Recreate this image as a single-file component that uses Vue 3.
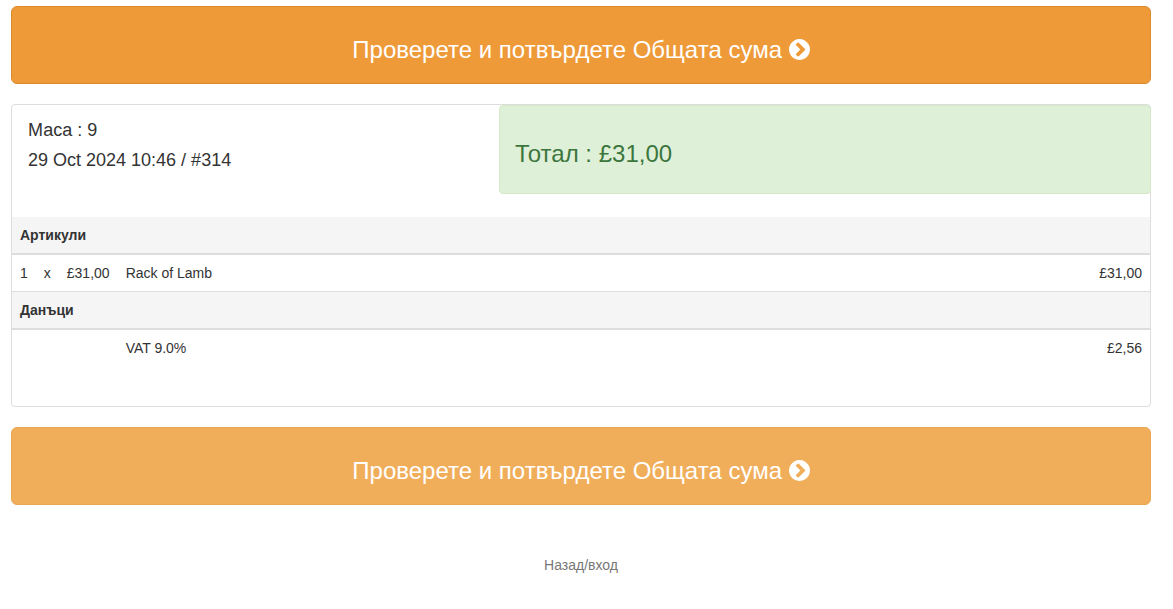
<script setup>
const items = [{ qty: '1', x: 'x', price: '£31,00', name: 'Rack of Lamb', amount: '£31,00' }]
const taxes = [{ name: 'VAT 9.0%', amount: '£2,56' }]
const label = 'Проверете и потвърдете Общата сума'
</script>

<template>
  <div class="page">
    <button class="pay-btn pay-btn--active">
      {{ label }}
      <svg class="chevron" viewBox="128 128 1536 1536"><path d="M845 1395l454-454q19-19 19-45t-19-45l-454-454q-19-19-45-19t-45 19l-102 102q-19 19-19 45t19 45l307 307-307 307q-19 19-19 45t19 45l102 102q19 19 45 19t45-19zm819-499q0 209-103 385.500t-279.500 279.500-385.500 103-385.500-103-279.500-279.500-103-385.500 103-385.500 279.500-279.500 385.500-103 385.500 103 279.500 279.500 103 385.500z" /></svg>
    </button>

    <div class="card">
      <div class="summary">
        <div class="summary-info">
          <div>Маса : 9</div>
          <div>29 Oct 2024 10:46 / #314</div>
        </div>
        <div class="summary-total">Тотал : £31,00</div>
      </div>

      <table class="bill">
        <tbody>
          <tr class="section"><td colspan="5">Артикули</td></tr>
          <tr v-for="item in items" :key="item.name" class="line">
            <td>{{ item.qty }}</td>
            <td>{{ item.x }}</td>
            <td>{{ item.price }}</td>
            <td class="wide">{{ item.name }}</td>
            <td class="amount">{{ item.amount }}</td>
          </tr>
          <tr class="section"><td colspan="5">Данъци</td></tr>
          <tr v-for="tax in taxes" :key="tax.name" class="line line--last">
            <td></td>
            <td></td>
            <td></td>
            <td class="wide">{{ tax.name }}</td>
            <td class="amount">{{ tax.amount }}</td>
          </tr>
        </tbody>
      </table>
    </div>

    <button class="pay-btn">
      {{ label }}
      <svg class="chevron" viewBox="128 128 1536 1536"><path d="M845 1395l454-454q19-19 19-45t-19-45l-454-454q-19-19-45-19t-45 19l-102 102q-19 19-19 45t19 45l307 307-307 307q-19 19-19 45t19 45l102 102q19 19 45 19t45-19zm819-499q0 209-103 385.500t-279.500 279.500-385.500 103-385.500-103-279.500-279.500-103-385.500 103-385.500 279.500-279.500 385.500-103 385.500 103 279.500 279.500 103 385.500z" /></svg>
    </button>

    <a class="back" href="#">Назад/вход</a>
  </div>
</template>

<style scoped>
.page {
  display: flex;
  flex-direction: column;
  gap: 20px;
  width: 1140px;
  margin-left: 11px;
  padding-top: 6px;
  color: #333;
  font-family: "Liberation Sans", Arial, sans-serif;
  font-size: 14px;
  line-height: 20px;
}

.pay-btn {
  display: block;
  width: 100%;
  height: 78px;
  padding: 10px 0 0;
  border: 1px solid #eba650;
  border-radius: 6px;
  background: #f0ae5b;
  color: #fff;
  font-family: inherit;
  font-size: 24px;
  line-height: 34px;
  text-align: center;
}

.pay-btn--active {
  border-color: #d98b2c;
  background: #ee9a38;
}

.chevron {
  width: 21px;
  height: 21px;
  fill: #fff;
  vertical-align: -2px;
}

.card {
  height: 303px;
  box-sizing: border-box;
  border: 1px solid #ddd;
  border-radius: 4px;
  background: #fff;
}

.summary {
  display: flex;
  align-items: flex-start;
  margin-bottom: 23px;
}

.summary-info {
  width: 487px;
  padding: 10px 16px 0;
  box-sizing: border-box;
  font-size: 18px;
  line-height: 30px;
}

.summary-total {
  flex: 1;
  height: 89px;
  box-sizing: border-box;
  margin-right: -1px;
  padding-left: 15px;
  border: 1px solid #d6e9c6;
  border-radius: 4px;
  background: #dff0d8;
  color: #3c763d;
  font-size: 24px;
  line-height: 95px;
}

.bill {
  width: 100%;
  border-collapse: collapse;
}

.bill td {
  padding: 8px;
  white-space: nowrap;
}

.section td {
  border-bottom: 2px solid #ddd;
  background: #f5f5f5;
  font-weight: bold;
}

.line td {
  border-bottom: 1px solid #ddd;
}

.line--last td {
  border-bottom: 0;
}

.wide {
  width: 100%;
}

.amount {
  text-align: right;
}

.back {
  margin-top: 30px;
  color: #777;
  text-align: center;
  text-decoration: none;
}
</style>
